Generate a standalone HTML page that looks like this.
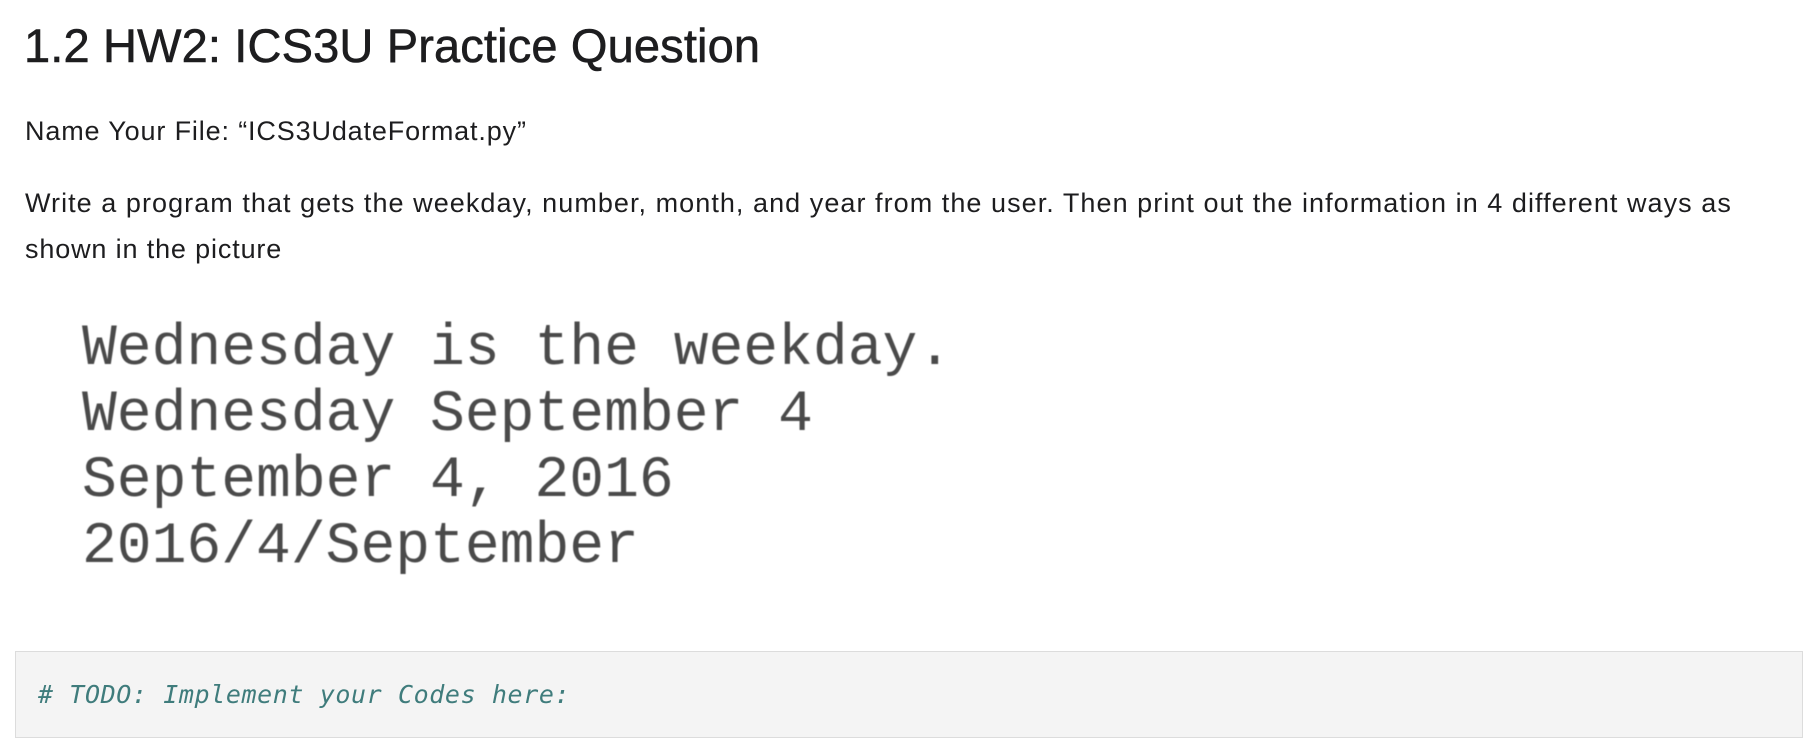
<!DOCTYPE html>
<html><head><meta charset="utf-8"><style>
html,body{margin:0;padding:0;background:#fff;width:1812px;height:746px;overflow:hidden;position:relative}
.t{position:absolute;white-space:nowrap;font-family:"Liberation Sans",sans-serif;color:#1d1d1f}
h1{position:absolute;margin:0;left:24px;top:18px;font-family:"Liberation Sans",sans-serif;font-weight:500;font-size:47px;line-height:56px;color:#1d1d1f;letter-spacing:0.15px;white-space:nowrap;-webkit-text-stroke:0.6px #1d1d1f}
.p{font-size:27px;line-height:30px;letter-spacing:0.85px}
.m{position:absolute;left:82px;font-family:"Liberation Mono","Courier New",monospace;font-size:58px;line-height:60px;color:#4a4a4a;white-space:pre;filter:blur(0.6px)}
.code{position:absolute;left:15px;top:651px;width:1786px;height:85px;background:#f4f4f4;border:1px solid #dcdcdc}
.c{position:absolute;left:22px;top:28px;font-family:"DejaVu Sans Mono",monospace;font-style:italic;font-size:25px;line-height:30px;color:#3f7c7c;letter-spacing:0.6px;white-space:pre}
</style></head><body>
<h1>1.2 HW2: ICS3U Practice Question</h1>
<div class="t p" style="left:25px;top:116px">Name Your File: “ICS3UdateFormat.py”</div>
<div class="t p" style="left:25px;top:188px;letter-spacing:1.05px">Write a program that gets the weekday, number, month, and year from the user. Then print out the information in 4 different ways as</div>
<div class="t p" style="left:25px;top:234px">shown in the picture</div>
<div class="m" style="top:320px">Wednesday is the weekday.</div>
<div class="m" style="top:386px">Wednesday September 4</div>
<div class="m" style="top:452px">September 4, 2016</div>
<div class="m" style="top:518px">2016/4/September</div>
<div class="code"><div class="c"># TODO: Implement your Codes here:</div></div>
</body></html>
